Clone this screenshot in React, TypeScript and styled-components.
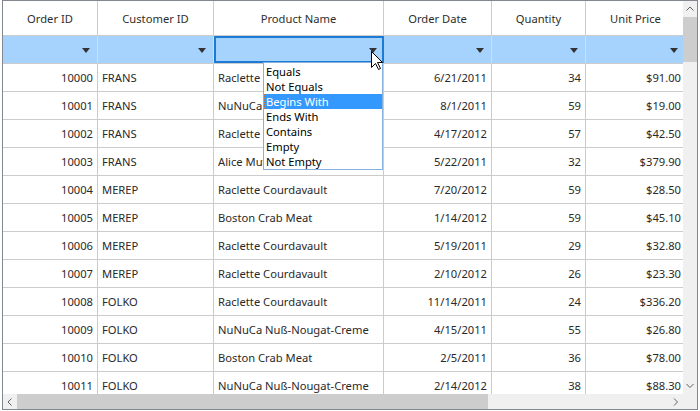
import React from "react";
import styled, { createGlobalStyle, css } from "styled-components";

const GlobalStyle = createGlobalStyle`
  html, body { margin: 0; padding: 0; background: #ffffff; }
  body { font-family: "Noto Sans", "Open Sans", sans-serif; }
`;

const COLS = "95px 116px 170px 108px 94px 100px";

const GridFrame = styled.div`
  position: relative;
  box-sizing: border-box;
  margin-left: 2px;
  width: 696px;
  height: 410px;
  border: 1px solid #828790;
  display: grid;
  grid-template-columns: 680px 14px;
  grid-template-rows: 393px 15px;
  background: #ffffff;
  font-size: 11.2px;
  color: #2a2a2a;
`;

const Viewport = styled.div`
  overflow: hidden;
  display: flex;
  flex-direction: column;
`;

const RowBase = styled.div`
  box-sizing: border-box;
  display: grid;
  grid-template-columns: ${COLS};
  width: 683px;
  flex: none;
  border-bottom: 1px solid #cccccc;
`;

const HeaderRow = styled(RowBase)`
  height: 35px;
`;

const HeaderCell = styled.div`
  box-sizing: border-box;
  border-right: 1px solid #cccccc;
  display: flex;
  align-items: center;
  justify-content: center;
  color: #2e2e2e;
  white-space: nowrap;
`;

const FilterRow = styled(RowBase)`
  height: 28px;
  background: #a6d3fd;
`;

const FilterCell = styled.div<{ $active?: boolean }>`
  position: relative;
  box-sizing: border-box;
  border-right: 1px solid #d6dde4;
  display: flex;
  align-items: center;
  justify-content: flex-end;
  padding-right: ${(p) => (p.$active ? 6 : 7)}px;
  ${(p) =>
    p.$active &&
    css`
      &::after {
        content: "";
        position: absolute;
        top: 0;
        bottom: 0;
        left: 0;
        right: -1px;
        border: 2px solid #1c7cd5;
        pointer-events: none;
      }
    `}
`;

const FilterArrow = styled.span`
  width: 0;
  height: 0;
  border-left: 4px solid transparent;
  border-right: 4px solid transparent;
  border-top: 5px solid #333333;
  margin-top: 1px;
`;

const Body = styled.div`
  flex: 1;
  overflow: hidden;
`;

const DataRow = styled(RowBase)`
  height: 28px;
`;

const DataCell = styled.div<{ $align: "left" | "right" }>`
  box-sizing: border-box;
  border-right: 1px solid #cccccc;
  display: flex;
  align-items: center;
  justify-content: ${(p) => (p.$align === "right" ? "flex-end" : "flex-start")};
  padding: 0 4px 1px;
  white-space: nowrap;
  overflow: hidden;
  color: #2a2a2a;
`;

const VScroll = styled.div`
  display: flex;
  flex-direction: column;
  background: #f0f0f0;
`;

const HScroll = styled.div`
  display: flex;
  flex-direction: row;
  background: #f0f0f0;
`;

const Corner = styled.div`
  background: #f0f0f0;
`;

const ScrollButton = styled.div<{ $vertical?: boolean }>`
  flex: none;
  display: flex;
  align-items: center;
  justify-content: center;
  ${(p) => (p.$vertical ? "height: 16px;" : "width: 14px;")}
`;

const Thumb = styled.div<{ $vertical?: boolean }>`
  flex: none;
  background: #cdcdcd;
  ${(p) => (p.$vertical ? "height: 45px;" : "width: 471px;")}
`;

const Track = styled.div`
  flex: 1;
`;

const Dropdown = styled.div`
  position: absolute;
  left: 260px;
  top: 61px;
  box-sizing: border-box;
  width: 120px;
  height: 108px;
  padding-top: 1px;
  background: #ffffff;
  border: 1px solid #88b0dc;
  display: flex;
  flex-direction: column;
  color: #000000;
`;

const Option = styled.div<{ $selected?: boolean }>`
  box-sizing: border-box;
  height: 15px;
  line-height: 15px;
  padding-left: 2px;
  white-space: nowrap;
  ${(p) =>
    p.$selected &&
    css`
      background: #3399ff;
      color: #ffffff;
      border: 1px dotted #c8742f;
      padding-left: 1px;
      line-height: 13px;
    `}
`;

const Cursor = styled.svg`
  position: absolute;
  left: 368px;
  top: 50px;
  pointer-events: none;
`;

const Chevron = ({ dir }: { dir: "up" | "down" | "left" | "right" }) => {
  const pts: Record<string, string> = {
    up: "0.5,4.5 4,1 7.5,4.5",
    down: "0.5,1 4,4.5 7.5,1",
    left: "4.5,0.5 1,4 4.5,7.5",
    right: "1,0.5 4.5,4 1,7.5",
  };
  const vertical = dir === "up" || dir === "down";
  return (
    <svg width={vertical ? 8 : 6} height={vertical ? 6 : 8}>
      <polyline points={pts[dir]} fill="none" stroke="#606060" strokeWidth="1" />
    </svg>
  );
};

type Row = [string, string, string, string, string, string];

const rows: Row[] = [
  ["10000", "FRANS", "Raclette Courdavault", "6/21/2011", "34", "$91.00"],
  ["10001", "FRANS", "NuNuCa Nuß-Nougat-Creme", "8/1/2011", "59", "$19.00"],
  ["10002", "FRANS", "Raclette Courdavault", "4/17/2012", "57", "$42.50"],
  ["10003", "FRANS", "Alice Mutton", "5/22/2011", "32", "$379.90"],
  ["10004", "MEREP", "Raclette Courdavault", "7/20/2012", "59", "$28.50"],
  ["10005", "MEREP", "Boston Crab Meat", "1/14/2012", "59", "$45.10"],
  ["10006", "MEREP", "Raclette Courdavault", "5/19/2011", "29", "$32.80"],
  ["10007", "MEREP", "Raclette Courdavault", "2/10/2012", "26", "$23.30"],
  ["10008", "FOLKO", "Raclette Courdavault", "11/14/2011", "24", "$336.20"],
  ["10009", "FOLKO", "NuNuCa Nuß-Nougat-Creme", "4/15/2011", "55", "$26.80"],
  ["10010", "FOLKO", "Boston Crab Meat", "2/5/2011", "36", "$78.00"],
  ["10011", "FOLKO", "NuNuCa Nuß-Nougat-Creme", "2/14/2012", "38", "$88.30"],
];

const headers = ["Order ID", "Customer ID", "Product Name", "Order Date", "Quantity", "Unit Price"];
const aligns: ("left" | "right")[] = ["right", "left", "left", "right", "right", "right"];
const options = ["Equals", "Not Equals", "Begins With", "Ends With", "Contains", "Empty", "Not Empty"];

export default function App() {
  return (
    <>
      <GlobalStyle />
      <GridFrame>
        <Viewport>
          <HeaderRow>
            {headers.map((h) => (
              <HeaderCell key={h}>{h}</HeaderCell>
            ))}
          </HeaderRow>
          <FilterRow>
            {headers.map((h, i) => (
              <FilterCell key={h} $active={i === 2}>
                <FilterArrow />
              </FilterCell>
            ))}
          </FilterRow>
          <Body>
            {rows.map((r) => (
              <DataRow key={r[0]}>
                {r.map((v, i) => (
                  <DataCell key={i} $align={aligns[i]}>
                    {v}
                  </DataCell>
                ))}
              </DataRow>
            ))}
          </Body>
        </Viewport>
        <VScroll>
          <ScrollButton $vertical>
            <Chevron dir="up" />
          </ScrollButton>
          <Thumb $vertical />
          <Track />
          <ScrollButton $vertical>
            <Chevron dir="down" />
          </ScrollButton>
        </VScroll>
        <HScroll>
          <ScrollButton>
            <Chevron dir="left" />
          </ScrollButton>
          <Thumb />
          <Track />
          <ScrollButton>
            <Chevron dir="right" />
          </ScrollButton>
        </HScroll>
        <Corner />
        <Dropdown>
          {options.map((o) => (
            <Option key={o} $selected={o === "Begins With"}>
              {o}
            </Option>
          ))}
        </Dropdown>
        <Cursor width="13" height="20" viewBox="0 0 13 20">
          <polygon
            points="0.5,0.5 0.5,16.5 4.5,12.5 7.5,18.5 9.5,17.5 6.5,11.5 11.5,11.5"
            fill="#ffffff"
            stroke="#000000"
            strokeWidth="1"
            strokeLinejoin="miter"
          />
        </Cursor>
      </GridFrame>
    </>
  );
}
